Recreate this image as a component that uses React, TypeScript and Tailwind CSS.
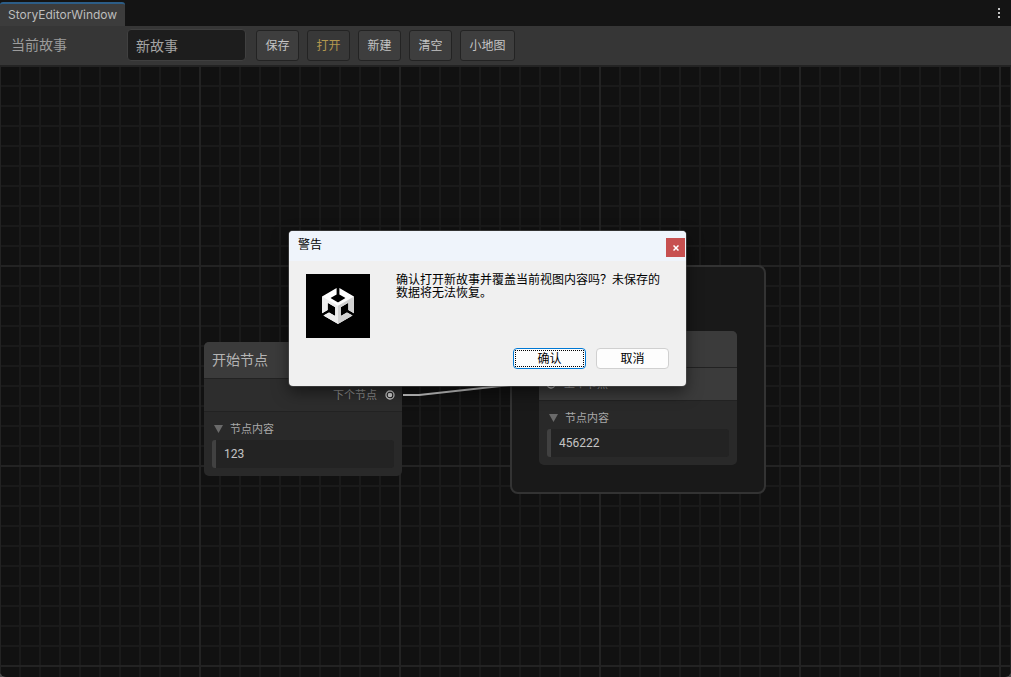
import React from "react";

const tools = [
    { label: "保存", className: "w-[43px] bg-[#3e3e3e] text-[#c4c4c4]" },
    { label: "打开", className: "w-[43px] bg-[#383838] text-[#b3974f]" },
    { label: "新建", className: "w-[43px] bg-[#3e3e3e] text-[#c4c4c4]" },
    { label: "清空", className: "w-[43px] bg-[#3e3e3e] text-[#c4c4c4]" },
    { label: "小地图", className: "w-[55px] bg-[#3e3e3e] text-[#c4c4c4]" },
];

const Port = () => (
    <svg viewBox="0 0 10 10" className="size-[10px]">
        <circle cx="5" cy="5" r="4" fill="#1c1c1c" stroke="#c4c4c4" strokeWidth="1.3" />
        <circle cx="5" cy="5" r="2.3" fill="#d4d4d4" />
    </svg>
);

interface StoryNodeProps {
    id: string;
    title?: string;
    port: "in" | "out";
    content: string;
    className: string;
}

const StoryNode: React.FC<StoryNodeProps> = ({ id, title, port, content, className }) => (
    <section className={`absolute w-[198px] overflow-hidden rounded-[5px] bg-[#292929] ${className}`}>
        <h2 className="h-9 bg-[#3b3b3b] px-2 text-[14px] leading-9 text-[#b4b4b4]">{title}</h2>
        {port === "out" ? (
            <div className="flex h-[34px] items-center justify-end gap-2 border-y border-[#222222] bg-[#2d2d2d] pr-[7px] text-[11px] text-[#8c8c8c]">
                <span>下个节点</span>
                <Port />
            </div>
        ) : (
            <div className="flex h-[34px] items-center gap-2 border-y border-[#222222] bg-[#3b3b3b] pl-[7px] text-[11px] text-[#a0a0a0]">
                <Port />
                <span>上个节点</span>
            </div>
        )}
        <div className="px-2 pt-[7px] pb-2">
            <label htmlFor={id} className="flex h-5 items-center gap-[7px] pl-[2px] text-[11px] text-[#a8a8a8]">
                <svg viewBox="0 0 9 8" className="h-2 w-[9px]">
                    <path d="M0 0h9L4.5 8z" fill="#6a6a6a" />
                </svg>
                节点内容
            </label>
            <input
                id={id}
                defaultValue={content}
                className="mt-px block h-7 w-full rounded-[3px] border-l-4 border-[#414141] bg-[#232323] px-2 pb-px font-[Roboto,'Noto_Sans_CJK_SC',sans-serif] text-[12px] text-[#c4c4c4] outline-none"
            />
        </div>
    </section>
);

const UnityLogo = () => (
    <svg viewBox="0 0 24 24" className="size-9">
        <defs>
            <clipPath id="cube">
                <path d="m12.9288 4.2939 3.7997 2.1929c.1366.077.1415.2905 0 .3675l-4.515 2.6076a.4192.4192 0 0 1-.4246 0L7.274 6.8543c-.139-.0745-.1415-.293 0-.3675l3.7972-2.193V0L1.3758 5.5977V16.793l3.7177-2.1456v-4.3858c-.0025-.1565.1813-.2682.318-.1838l4.5148 2.6076a.4252.4252 0 0 1 .2136.3676v5.2127c.0025.1565-.1813.2682-.3179.1838l-3.7996-2.1929-3.7178 2.1457L12 24l9.6954-5.5977-3.7178-2.1457-3.7996 2.1929c-.1341.082-.3229-.0248-.3179-.1838V13.053c0-.1565.087-.2956.2136-.3676l4.5149-2.6076c.134-.082.3228.0224.3179.1838v4.3858l3.7177 2.1456V5.5977L12.9288 0Z" />
            </clipPath>
        </defs>
        <g clipPath="url(#cube)">
            <path d="M0 0h24v24H0z" fill="#ffffff" />
            <path d="M1.3 5.6 12 11.8V24L1.3 18.4z" fill="#ededed" />
            <path d="M22.7 5.6 12 11.8V24l10.7-5.6z" fill="#d2d2d2" />
        </g>
    </svg>
);

const WarningDialog = () => (
    <div
        role="alertdialog"
        aria-labelledby="dialog-title"
        aria-describedby="dialog-text"
        className="absolute top-[231px] left-[289px] w-[397px] overflow-hidden rounded-[4px] bg-[#f0f0f0] pb-[17px] text-[12px] text-black shadow-[0_0_0_1px_#55555580,0_6px_16px_#00000080]"
    >
        <div className="flex h-[30px] items-start justify-between bg-[#eff4fb] pr-px pl-[9px]">
            <h1 id="dialog-title" className="leading-7">警告</h1>
            <button aria-label="关闭" className="mt-[7px] flex h-[19px] w-[19px] items-center justify-center bg-[#c75050]">
                <svg viewBox="0 0 6 6" className="size-[6px]">
                    <path d="M.5.5l5 5M5.5.5l-5 5" stroke="#ffffff" strokeWidth="1.5" />
                </svg>
            </button>
        </div>
        <div className="flex items-start gap-[26px] pt-3 pr-5 pl-[17px]">
            <div className="mt-px flex size-16 shrink-0 items-center justify-center bg-black">
                <UnityLogo />
            </div>
            <p id="dialog-text" className="leading-[13px]">
                确认打开新故事并覆盖当前视图内容吗？未保存的数据将无法恢复。
            </p>
        </div>
        <div className="mt-[10px] flex justify-end gap-[10px] pr-[17px]">
            <button className="h-[21px] w-[73px] rounded-[4px] border border-[#0078d4] bg-[#fdfdfd] p-px">
                <span className="flex h-full items-center justify-center border border-dotted border-black">确认</span>
            </button>
            <button className="h-[21px] w-[73px] rounded-[4px] border border-[#d0d0d0] bg-[#fdfdfd]">取消</button>
        </div>
    </div>
);

const App = () => (
    <div className="h-screen bg-[#4a4a4a]">
        <div className="relative flex h-full flex-col overflow-hidden rounded-b-[6px] bg-[#111111] font-[Inter,'Noto_Sans_CJK_SC',sans-serif]">
            <header className="flex h-[26px] shrink-0 items-end justify-between bg-[#141414] pr-2">
                <div role="tab" className="h-6 rounded-t-[3px] border-t-2 border-[#2c5d87] bg-[#3c3c3c] px-2 text-[12px] leading-[22px] text-[#bdbdbd]">
                    StoryEditorWindow
                </div>
                <button aria-label="菜单" className="flex h-full w-2 items-center justify-center">
                    <svg viewBox="0 0 2 10" className="h-[10px] w-[2px]">
                        <path d="M0 0h2v2H0zM0 4h2v2H0zM0 8h2v2H0z" fill="#c4c4c4" />
                    </svg>
                </button>
            </header>

            <div className="flex h-[39px] shrink-0 items-start bg-[#363636] pt-[3px] pl-[11px]">
                <label htmlFor="story" className="w-[116px] text-[14px] leading-[31px] text-[#9c9c9c]">当前故事</label>
                <input
                    id="story"
                    defaultValue="新故事"
                    className="mr-[10px] h-8 w-[119px] rounded-[4px] border border-[#404040] bg-[#1d1d1d] px-2 text-[14px] text-[#a4a4a4] outline-none"
                />
                <div className="mt-px flex gap-2">
                    {tools.map((tool) => (
                        <button
                            key={tool.label}
                            className={`h-[31px] rounded-[3px] border border-[#232323] pt-px text-[12px] ${tool.className}`}
                        >
                            {tool.label}
                        </button>
                    ))}
                </div>
            </div>

            {/* Graph view: thick lines every 200px, thin lines every 20px */}
            <main className="relative flex-1 border-r border-[#232323] bg-[linear-gradient(#232323_2px,transparent_2px),linear-gradient(90deg,#232323_2px,transparent_2px),linear-gradient(#1a1a1a_2px,transparent_2px),linear-gradient(90deg,#1a1a1a_2px,transparent_2px)] bg-[size:200px_200px,200px_200px,20px_20px,20px_20px] bg-[position:-1px_0]">
                <div className="absolute top-[200px] left-[510px] h-[229px] w-[256px] rounded-[8px] border-2 border-[#333333] bg-[#191919]" />
                <StoryNode id="start" title="开始节点" port="out" content="123" className="top-[277px] left-[204px]" />
                <StoryNode id="next" port="in" content="456222" className="top-[266px] left-[539px]" />
                <svg viewBox="0 0 137 16" className="absolute top-[317px] left-[402px] h-4 w-[137px]">
                    <path d="M1 13h16L121 1.500h16" fill="none" stroke="#c8c8c8" strokeWidth="2" />
                </svg>
            </main>

            <WarningDialog />
        </div>
    </div>
);

export default App;
